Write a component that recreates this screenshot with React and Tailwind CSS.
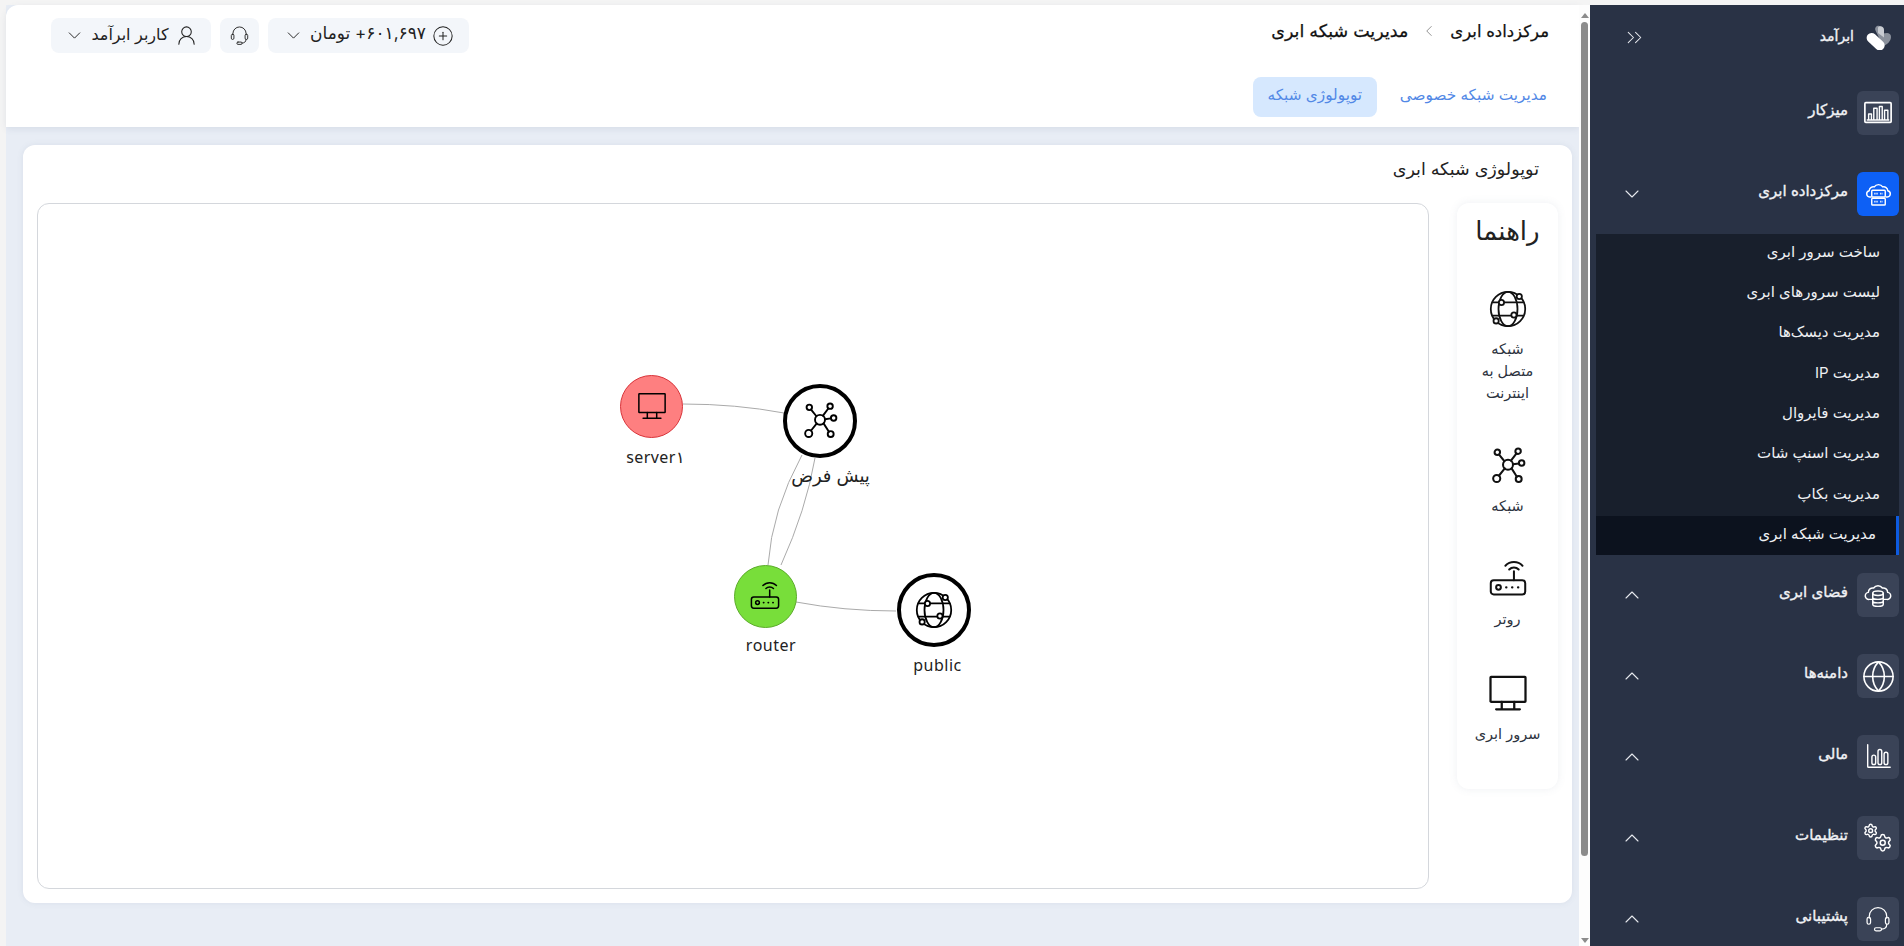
import React from 'react';
import { ChevronDown, ChevronUp, ChevronRight, ChevronsRight, Globe, CirclePlus, UserRound } from 'lucide-react';

const gear = "M9.671 4.136a2.34 2.34 0 0 1 4.659 0 2.34 2.34 0 0 0 3.319 1.915 2.34 2.34 0 0 1 2.33 4.033 2.34 2.34 0 0 0 0 3.831 2.34 2.34 0 0 1-2.33 4.033 2.34 2.34 0 0 0-3.319 1.915 2.34 2.34 0 0 1-4.659 0 2.34 2.34 0 0 0-3.32-1.915 2.34 2.34 0 0 1-2.33-4.033 2.34 2.34 0 0 0 0-3.831A2.34 2.34 0 0 1 6.35 6.051a2.34 2.34 0 0 0 3.32-1.915";

function Svg({ size = 32, sw = 1.5, children, className = '' }) {
    return (
        <svg width={size} height={size} viewBox="0 0 32 32" fill="none" stroke="currentColor" strokeWidth={sw} strokeLinecap="round" strokeLinejoin="round" className={className}>
            {children}
        </svg>
    );
}

function Headset(props) {
    return (
        <Svg {...props}>
            <path d="M6 15v-2a10 10 0 0 1 20 0v2" />
            <rect x="3.500" y="14" width="4" height="8" rx="2" />
            <rect x="24.500" y="14" width="4" height="8" rx="2" />
            <path d="M26 22c0 4-3 5.500-6 5.500" />
            <rect x="12" y="26" width="8" height="3.500" rx="1.700" />
        </Svg>
    );
}

function DashboardIcon() {
    return (
        <Svg size={30} sw={1.5}>
            <rect x="2" y="5" width="28" height="21" rx="1" strokeWidth="1.800" />
            <path d="M6 23v-6h3v6M11.500 23V11h3.500v12M17.500 23V9h3v14M23 23V13h3.500v10M4.500 23.500h23" />
        </Svg>
    );
}

function CloudServer() {
    return (
        <Svg size={27} sw={1.7}>
            <path d="M7 19H5.500a3.800 3.800 0 0 1-.5-7.500 5 5 0 0 1 6-4.500 6 6 0 0 1 10 0 5 5 0 0 1 6 4.500 3.800 3.800 0 0 1-.5 7.500H25" />
            <rect x="8" y="11" width="16" height="8" rx="1" />
            <rect x="8" y="20.500" width="16" height="8" rx="1" />
            <path d="M11 15h4M18 15h3M11 24.500h4M18 24.500h3" strokeWidth="2" strokeDasharray="1.500 1" strokeLinecap="butt" />
        </Svg>
    );
}

function CloudDb() {
    return (
        <Svg size={28} sw={1.7}>
            <path d="M9 21H6a4 4 0 0 1-1-8 5 5 0 0 1 6-5 6 6 0 0 1 10 0 5 5 0 0 1 6 5 4 4 0 0 1-1 8h-3" />
            <ellipse cx="16" cy="14" rx="6" ry="2.500" />
            <path d="M10 14v12.500c0 1.300 2.500 2.500 6 2.500s6-1.200 6-2.500V14M10 18.500c0 1.300 2.500 2.500 6 2.500s6-1.200 6-2.500M10 22.500c0 1.300 2.500 2.500 6 2.500s6-1.200 6-2.500" />
        </Svg>
    );
}

function MoneyBars() {
    return (
        <Svg size={30}>
            <path d="M5 3v23a1 1 0 0 0 1 1h23" />
            <rect x="9.500" y="14" width="4" height="10" rx="2" />
            <rect x="16" y="8" width="4" height="16" rx="2" />
            <rect x="22.500" y="11" width="4" height="13" rx="2" />
        </Svg>
    );
}

function Gears() {
    return (
        <svg width="30" height="30" viewBox="0 0 32 32" fill="none" stroke="currentColor" strokeLinecap="round" strokeLinejoin="round">
            <g transform="translate(0 0) scale(0.68)" strokeWidth="2.200">
                <path d={gear} />
                <circle cx="12" cy="12" r="3" />
            </g>
            <g transform="translate(10.500 10.500) scale(0.88)" strokeWidth="1.800">
                <path d={gear} />
                <circle cx="12" cy="12" r="3" />
            </g>
        </svg>
    );
}

function Logo() {
    return (
        <svg width="26" height="26" viewBox="0 0 26 26">
            <path d="M15 3c-3-3-7 0-5.500 3.500L17 22c4-1 8-5 8-9 0-3-2-4-4-4l-4 .5z" fill="#8b919c" />
            <path d="M12 3.500c2-2.500 6-1 6 2v8L12 9z" fill="#c9ccd2" />
            <rect x="-1" y="13" width="21" height="10" rx="5" transform="rotate(43 10 18)" fill="#ffffff" />
        </svg>
    );
}

function NetworkIcon({ size = 38, sw = 1.700 }) {
    return (
        <Svg size={size} sw={sw}>
            <circle cx="16" cy="15" r="4.200" />
            <circle cx="7" cy="4.500" r="2.300" />
            <circle cx="24.500" cy="3.500" r="2.300" />
            <circle cx="27.500" cy="13.500" r="2.300" />
            <circle cx="6.500" cy="26.500" r="3" />
            <circle cx="25" cy="27" r="2.500" />
            <path d="M8.500 6.500l4.500 5.500M23 5.500l-4.500 6M25.200 13.800l-5 .7M8.500 24l4.800-6M23.500 25l-4.500-7" />
        </Svg>
    );
}

function RouterIcon({ size = 38, sw = 1.700 }) {
    return (
        <Svg size={size} sw={sw}>
            <rect x="1.500" y="17" width="29" height="12" rx="2.500" />
            <circle cx="8" cy="23" r="2" />
            <path d="M14.500 23h.1M19.500 23h.1M24.500 23h.1" strokeWidth="2" />
            <path d="M21 17V9.500M17 8a5.500 5.500 0 0 1 8 0M13.800 4.800a10 10 0 0 1 14.400 0" />
        </Svg>
    );
}

function MonitorIcon({ size = 40, sw = 1.800 }) {
    return (
        <Svg size={size} sw={sw}>
            <rect x="2" y="3" width="28" height="20" rx="0.500" />
            <path d="M11 23v5.500M21 23v5.500M6.500 29h19" />
        </Svg>
    );
}

function NetGlobe({ size = 38, sw = 1.500 }) {
    return (
        <Svg size={size} sw={sw}>
            <circle cx="16" cy="16" r="14.500" />
            <ellipse cx="16" cy="16" rx="8" ry="14.500" />
            <path d="M3 10.500h26M3 21.500h26" />
            <circle cx="10.500" cy="10.500" r="2.200" fill="#fff" />
            <circle cx="21" cy="21" r="2.200" fill="#fff" />
            <circle cx="25.500" cy="5.500" r="2.200" fill="#fff" />
            <circle cx="6" cy="26" r="2.200" fill="#fff" />
        </Svg>
    );
}

function Row({ label, icon, chevron, active }) {
    return (
        <div className="flex h-11 items-center justify-between pl-[31px] pr-[5px]">
            <div className="w-[24px] text-[#e7e9ee]">
                {chevron === 'down' && <ChevronDown size={24} strokeWidth={1.1} className="-ml-px" />}
                {chevron === 'up' && <ChevronUp size={24} strokeWidth={1.1} className="-ml-px" />}
            </div>
            <div className="flex items-center gap-[9px]">
                <span className="pb-[5px] text-[15px] text-[#f1f2f5] [-webkit-text-stroke:0.35px_#f1f2f5]" dir="rtl">{label}</span>
                <div className={`flex h-11 w-[42px] items-center justify-center rounded-md text-white ${active ? 'bg-[#0d60f5]' : 'bg-[#3a4357]'}`}>
                    {icon}
                </div>
            </div>
        </div>
    );
}

const subItems = ['ساخت سرور ابری', 'لیست سرورهای ابری', 'مدیریت دیسک‌ها', 'مدیریت IP', 'مدیریت فایروال', 'مدیریت اسنپ شات', 'مدیریت بکاپ'];

function Sidebar() {
    return (
        <aside className="flex h-full w-[314px] shrink-0 flex-col bg-[#293245]">
            <div className="flex h-[86px] shrink-0 items-start justify-between pl-[32px] pr-[12px] pt-[19px]">
                <ChevronsRight size={25} strokeWidth={1} className="mt-[1px] text-[#e7e9ee]" />
                <div className="flex items-center gap-[12px]">
                    <span className="pb-[4px] text-[14px] text-[#f1f2f5] [-webkit-text-stroke:0.35px_#f1f2f5]" dir="rtl">ابرآمد</span>
                    <Logo />
                </div>
            </div>
            <Row label="میزکار" icon={<DashboardIcon />} />
            <div className="h-[37px] shrink-0" />
            <Row label="مرکزداده ابری" icon={<CloudServer />} chevron="down" active />
            <div className="mb-[18px] ml-[6px] mr-[5px] mt-[18px] shrink-0 bg-[#181f2c] text-[15px] text-[#eef0f3]" dir="rtl">
                {subItems.map((s) => (
                    <div key={s} className="flex h-[40.300px] items-center pb-[4px] pr-[19px]">{s}</div>
                ))}
                <div className="flex h-[39px] items-center border-r-[3px] border-[#0d5be0] bg-[#0c121e] pb-[2px] pr-[20px]">مدیریت شبکه ابری</div>
            </div>
            <div className="flex flex-col gap-[37px]">
                <Row label="فضای ابری" icon={<CloudDb />} chevron="up" />
                <Row label="دامنه‌ها" icon={<Globe size={35} strokeWidth={1.1} />} chevron="up" />
                <Row label="مالی" icon={<MoneyBars />} chevron="up" />
                <Row label="تنظیمات" icon={<Gears />} chevron="up" />
                <Row label="پشتیبانی" icon={<Headset size={28} sw={1.4} />} chevron="up" />
            </div>
        </aside>
    );
}

function Header() {
    return (
        <header className="h-[122px] shrink-0 rounded-tl-xl bg-white shadow-[0_2px_6px_rgba(90,110,140,0.12)]">
            <div className="flex h-[72px] items-start justify-between pl-[45px] pr-[30px] pt-[13px]">
                <div className="flex items-center gap-[9px] text-[#222]">
                    <div className="flex h-[35px] w-[160px] items-center justify-center gap-[2px] rounded-lg bg-[#f3f6fa]">
                        <ChevronDown size={21} strokeWidth={1.1} />
                        <span className="mx-1 pb-[3px] text-[16px]" dir="rtl">کاربر ابرآمد</span>
                        <UserRound size={23} strokeWidth={1.1} />
                    </div>
                    <div className="flex h-[35px] w-[39px] items-center justify-center rounded-lg bg-[#f3f6fa]">
                        <Headset size={21} sw={1.4} />
                    </div>
                    <div className="flex h-[35px] w-[201px] items-center justify-center gap-[3px] rounded-lg bg-[#f3f6fa]">
                        <ChevronDown size={21} strokeWidth={1.1} />
                        <span className="mx-[3px] pb-[3px] text-[17px]" dir="rtl">۶۰۱,۶۹۷+ تومان</span>
                        <CirclePlus size={22} strokeWidth={1.1} />
                    </div>
                </div>
                <div className="flex items-center gap-[12px] text-[#111] [-webkit-text-stroke:0.25px_#111]" dir="rtl">
                    <span className="text-[16.500px]">مرکزداده ابری</span>
                    <ChevronRight size={18} strokeWidth={1.2} className="rotate-180 text-[#888]" />
                    <span className="text-[17.500px]">مدیریت شبکه ابری</span>
                </div>
            </div>
            <div className="flex items-start justify-end gap-[23px] pr-[32px] text-[15.300px] text-[#5288e6]">
                <div className="flex h-10 w-[124px] items-center justify-center rounded-lg bg-[#d6e8fe] pb-[3px]" dir="rtl">توپولوژی شبکه</div>
                <div className="flex h-10 items-center pb-[3px]" dir="rtl">مدیریت شبکه خصوصی</div>
            </div>
        </header>
    );
}

function LegendItem({ icon, children }) {
    return (
        <div className="flex flex-col items-center">
            {icon}
            <div className="mt-[10px] whitespace-nowrap text-center text-[14.500px] leading-[22px] text-[#2d3340]" dir="rtl">{children}</div>
        </div>
    );
}

function Legend() {
    return (
        <div className="flex h-[586px] w-[101px] shrink-0 flex-col items-center rounded-xl bg-white shadow-[0_0_8px_rgba(90,110,140,0.1)]">
            <div className="mb-[41px] mt-[10px] text-[26px] leading-[36px] text-[#222]" dir="rtl">راهنما</div>
            <div className="flex flex-col items-center gap-[43px] text-[#111]">
                <LegendItem icon={<NetGlobe />}>شبکه<br />متصل به<br />اینترنت</LegendItem>
                <LegendItem icon={<NetworkIcon />}>شبکه</LegendItem>
                <LegendItem icon={<RouterIcon />}>روتر</LegendItem>
                <LegendItem icon={<MonitorIcon />}>سرور ابری</LegendItem>
            </div>
        </div>
    );
}

// node positions are relative to the graph box (box starts at 37,203 on the page)
function Node({ x, y, r, bg, border, bw, label, labelClass = '', children }) {
    return (
        <>
            <div
                className="absolute flex items-center justify-center rounded-full text-black"
                style={{ left: x - r, top: y - r, width: r * 2, height: r * 2, background: bg, border: `${bw}px solid ${border}` }}
            >
                {children}
            </div>
            <div
                className={`absolute -translate-x-1/2 whitespace-nowrap text-[#222] ${labelClass}`}
                style={{ left: x + (label.offset || 0), top: y + r + label.top }}
            >
                {label.text}
            </div>
        </>
    );
}

function Graph() {
    return (
        <div className="relative h-[686px] w-[1392px] shrink-0 rounded-xl border border-[#d4d7dc] bg-white">
            <svg className="absolute left-0 top-0" width="1391" height="686" fill="none" stroke="#aaaaaa" strokeWidth="1">
                <path d="M645 200 Q698 200 746 209" />
                <path d="M764 251 Q734 306 730 361" />
                <path d="M777 254 Q768 306 743 361" />
                <path d="M758 398 Q806 407 858 407" />
            </svg>
            <Node x={613.500} y={202} r={31.500} bg="#fe7f80" border="#d8343a" bw={1} label={{ text: 'server۱', top: 7, offset: 4 }} labelClass="font-['Noto_Sans',sans-serif] text-[16px] tracking-[0.4px]">
                <MonitorIcon size={30} sw={1.600} />
            </Node>
            <Node x={781.500} y={217} r={37} bg="#fff" border="#000" bw={4} label={{ text: 'پیش فرض', top: 4, offset: 11 }} labelClass="text-[18px]">
                <NetworkIcon size={38} sw={1.600} />
            </Node>
            <Node x={727} y={392} r={31.500} bg="#78de3a" border="#5cab2b" bw={1} label={{ text: 'router', top: 5, offset: 6 }} labelClass="font-['Noto_Sans',sans-serif] text-[16px] tracking-[0.5px]">
                <RouterIcon size={30} sw={1.600} />
            </Node>
            <Node x={895.500} y={406} r={37} bg="#fff" border="#000" bw={4} label={{ text: 'public', top: 6, offset: 4 }} labelClass="font-['Noto_Sans',sans-serif] text-[16px] tracking-[0.5px]">
                <NetGlobe size={38} sw={1.500} />
            </Node>
        </div>
    );
}

function Scrollbar() {
    return (
        <div className="flex h-full w-[11px] shrink-0 flex-col items-center bg-[#fdfdfd]">
            <div className="mt-[8px] h-0 w-0 border-x-[4px] border-b-[5px] border-x-transparent border-b-[#8c8c8c]" />
            <div className="mt-[4px] h-[834px] w-[7px] rounded-full bg-[#8c8c8c]" />
            <div className="mb-[3px] mt-auto h-0 w-0 border-x-[4px] border-t-[5px] border-x-transparent border-t-[#8c8c8c]" />
        </div>
    );
}

export default function App() {
    return (
        <div className="flex h-[946px] w-[1904px] overflow-hidden bg-[#f4f4f4] pt-[5px] font-['Inter','DejaVu_Sans',sans-serif]">
            <main className="ml-[6px] flex w-[1573px] shrink-0 flex-col bg-[#e8edf5]">
                <Header />
                <div className="ml-[17px] mt-[18px] h-[758px] w-[1549px] rounded-xl bg-white px-[14px] shadow-[0_0_6px_rgba(90,110,140,0.1)]">
                    <div className="flex h-[58px] items-center pb-[9px] pr-[19px] text-[17.500px] text-[#222]" dir="rtl">
                        توپولوژی شبکه ابری
                    </div>
                    <div className="flex items-start gap-[28px]">
                        <Graph />
                        <Legend />
                    </div>
                </div>
            </main>
            <Scrollbar />
            <Sidebar />
        </div>
    );
}
